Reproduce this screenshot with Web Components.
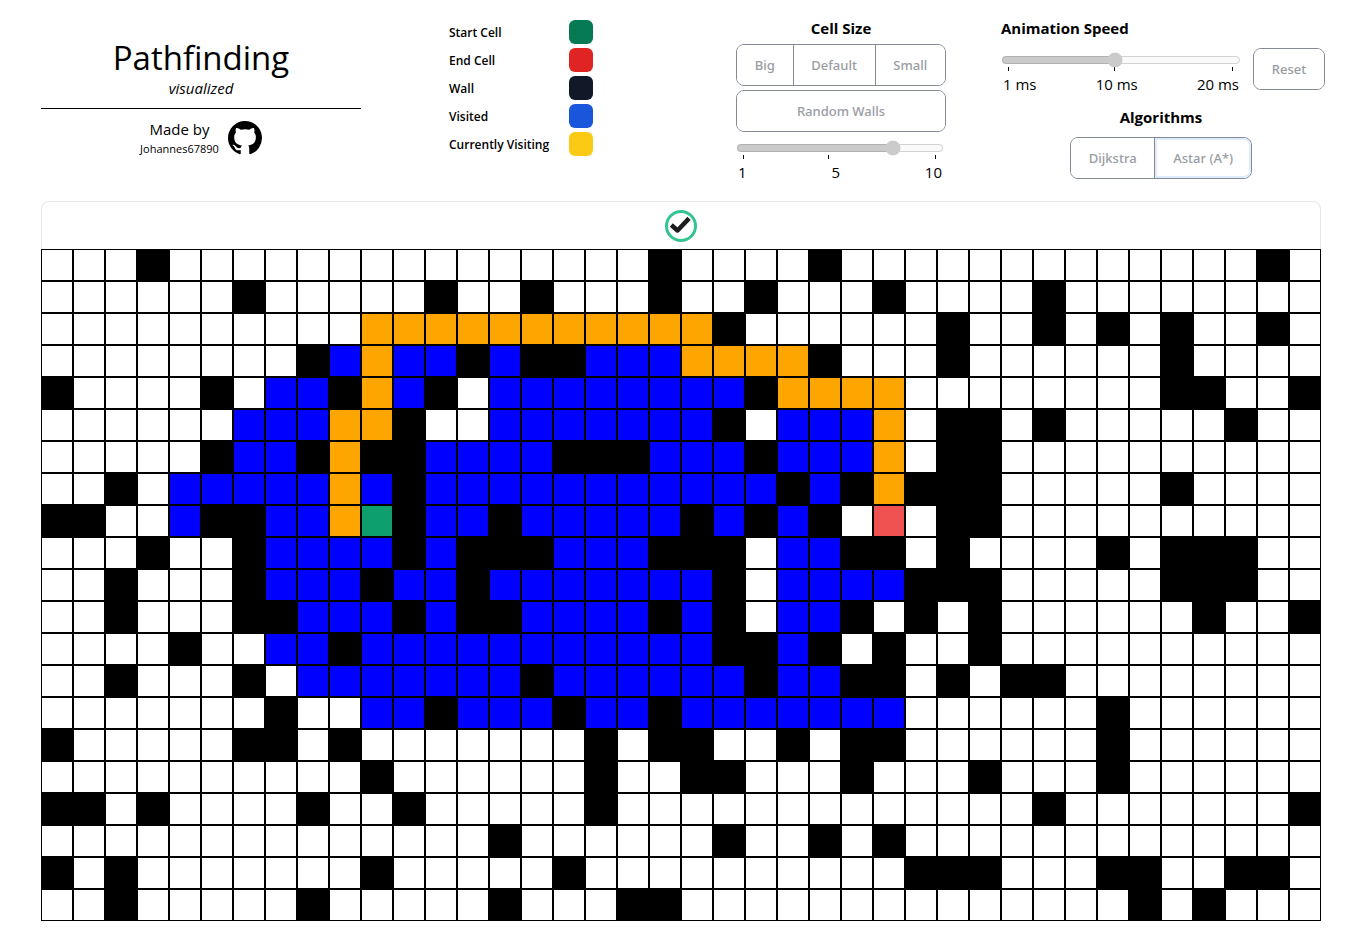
<!DOCTYPE html>
<html lang="en">
<head>
<meta charset="utf-8">
<title>Pathfinding visualized</title>
<style>
  body { margin: 0; background: #fff; color: #000; font-family: "Open Sans", "Noto Sans", sans-serif; }
</style>
</head>
<body>
<path-app></path-app>

<script>
const define = (name, html, setup) => {
  const template = document.createElement('template');
  template.innerHTML = html;
  customElements.define(name, class extends HTMLElement {
    connectedCallback() {
      if (this.shadowRoot) return;
      this.attachShadow({ mode: 'open' }).append(template.content.cloneNode(true));
      if (setup) setup(this, this.shadowRoot);
    }
  });
};

define('path-brand', `
  <style>
    :host { display: block; text-align: center; padding-top: 21px; }
    h1 { margin: 0; font-size: 33px; line-height: 42px; font-weight: 400; }
    p { margin: 0; }
    .sub { font-style: italic; font-size: 15px; line-height: 18px; }
    .made { display: flex; justify-content: center; align-items: center; gap: 9px;
      margin-top: 11px; padding-top: 9px; border-top: 1px solid #000; }
    .by { font-size: 15px; line-height: 22px; }
    .name { font-size: 11px; line-height: 18px; }
    a { display: block; color: #000; }
    svg { display: block; width: 34px; height: 34px; }
  </style>
  <h1>Pathfinding</h1>
  <p class="sub">visualized</p>
  <div class="made">
    <div><p class="by">Made by</p><p class="name">Johannes67890</p></div>
    <a href="#" aria-label="GitHub">
      <svg viewBox="0 0 16 16" fill="currentColor"><path d="M8 0C3.58 0 0 3.58 0 8c0 3.54 2.29 6.53 5.47 7.59.4.07.55-.17.55-.38 0-.19-.01-.82-.01-1.49-2.01.37-2.53-.49-2.69-.94-.09-.23-.48-.94-.82-1.13-.28-.15-.68-.52-.01-.53.63-.01 1.08.58 1.23.82.72 1.21 1.87.87 2.33.66.07-.52.28-.87.51-1.07-1.78-.2-3.64-.89-3.64-3.95 0-.87.31-1.59.82-2.15-.08-.2-.36-1.02.08-2.12 0 0 .67-.21 2.2.82.64-.18 1.32-.27 2-.27s1.36.09 2 .27c1.53-1.04 2.2-.82 2.2-.82.44 1.1.16 1.92.08 2.12.51.56.82 1.27.82 2.15 0 3.07-1.87 3.75-3.65 3.95.29.25.54.73.54 1.48 0 1.07-.01 1.93-.01 2.2 0 .21.15.46.55.38A8.01 8.01 0 0 0 16 8c0-4.42-3.58-8-8-8z"/></svg>
    </a>
  </div>`);

define('legend-item', `
  <style>
    :host { display: flex; justify-content: space-between; align-items: center; height: 24px;
      font-size: 12px; font-weight: 600; white-space: nowrap; }
    i { width: 24px; height: 24px; border-radius: 6px; background: var(--swatch); }
  </style>
  <span><slot></slot></span><i></i>`,
  (host, root) => root.querySelector('i').style.setProperty('--swatch', host.getAttribute('color')));

define('button-group', `
  <style>
    :host { display: flex; box-sizing: border-box; height: 42px; border: 1px solid #848a96;
      border-radius: 8px; overflow: hidden; }
  </style>
  <slot></slot>`);

define('tool-button', `
  <style>
    :host { display: flex; flex: 1 1 auto; }
    :host(:not(:first-child)) { border-left: 1px solid #848a96; }
    button { flex: 1; padding: 0 16px; border: 0; background: #fff; color: #9a9ca3;
      font: 500 13px/20px "Noto Sans", "Open Sans", sans-serif; white-space: nowrap; }
    :host([active]) button { box-shadow: inset 0 0 0 2px #dfecfd; border-radius: 0 7px 7px 0; }
  </style>
  <button type="button" disabled><slot></slot></button>`);

define('range-slider', `
  <style>
    :host { display: block; }
    input { display: block; box-sizing: border-box; width: 100%; height: 16px; margin: 0; color: #000; }
    datalist { display: flex; justify-content: space-between; margin-top: 4px; }
    option { padding: 0 2px; font-size: 15px; line-height: 24px; }
  </style>
  <input type="range" list="marks" disabled>
  <datalist id="marks"></datalist>`,
  (host, root) => {
    const input = root.querySelector('input');
    for (const name of ['min', 'max']) input.setAttribute(name, host.getAttribute(name));
    input.value = host.getAttribute('value');
    input.setAttribute('aria-label', host.getAttribute('label'));
    for (const mark of host.getAttribute('marks').split(',')) {
      const option = document.createElement('option');
      option.value = mark;
      option.textContent = mark + (host.getAttribute('unit') || '');
      root.querySelector('datalist').append(option);
    }
  });

define('status-bar', `
  <style>
    :host { display: flex; justify-content: center; align-items: center; box-sizing: border-box; height: 48px;
      border: 1px solid #e5e7eb; border-bottom: 0; border-radius: 8px 8px 0 0; }
    svg { width: 32px; height: 32px; }
  </style>
  <svg viewBox="0 0 32 32" role="img" aria-label="Done">
    <circle cx="16" cy="16" r="14.5" fill="#fff" stroke="#34c48f" stroke-width="3"/>
    <path d="M8 16.500l4.500 4L22.500 10" fill="none" stroke="#1d1d1f" stroke-width="4.500" stroke-linejoin="round" stroke-linecap="square"/>
  </svg>`);

/* One line per row: w = wall, v = visited, p = path, s = start, e = end, then a column or a span of columns. */
const ROWS = [
  'w3 w19 w24 w38',
  'w6 w12 w15 w19 w22 w26 w31',
  'p10-20 w21 w28 w31 w33 w35 w38',
  'w8 v9 p10 v11-12 w13 v14 w15-16 v17-19 p20-23 w24 w28 w35',
  'w0 w5 v7-8 w9 p10 v11 w12 v14-21 w22 p23-26 w35-36 w39',
  'v6-8 p9-10 w11 v14-20 w21 v23-25 p26 w28-29 w31 w37',
  'w5 v6-7 w8 p9 w10-11 v12-15 w16-18 v19-21 w22 v23-25 p26 w28-29',
  'w2 v4-8 p9 v10 w11 v12-22 w23 v24 w25 p26 w27-29 w35',
  'w0-1 v4 w5-6 v7-8 p9 s10 w11 v12-13 w14 v15-19 w20 v21 w22 v23 w24 e26 w28-29',
  'w3 w6 v7-10 w11 v12 w13-15 v16-18 w19-21 v23-24 w25-26 w28 w33 w35-37',
  'w2 w6 v7-9 w10 v11-12 w13 v14-20 w21 v23-26 w27-29 w35-37',
  'w2 w6-7 v8-10 w11 v12 w13-14 v15-18 w19 v20 w21 v23-24 w25 w27 w29 w36 w39',
  'w4 v7-8 w9 v10-20 w21-22 v23 w24 w26 w29',
  'w2 w6 v8-14 w15 v16-21 w22 v23-24 w25-26 w28 w30-31',
  'w7 v10-11 w12 v13-15 w16 v17-18 w19 v20-26 w33',
  'w0 w6-7 w9 w17 w19-20 w23 w25-26 w33',
  'w10 w17 w20-21 w25 w29 w33',
  'w0-1 w3 w8 w11 w17 w31 w39',
  'w14 w21 w24 w26',
  'w0 w2 w10 w16 w27-29 w33-34 w37-38',
  'w2 w8 w14 w18-19 w34 w36'
];

define('path-grid', `
  <style>
    :host { display: grid; grid-template-columns: repeat(40, 1fr); }
    div { box-sizing: border-box; aspect-ratio: 1; border: 1px solid #000; background: #fff; }
    .w { background: #000; }
    .v { background: #00f; }
    .p { background: #ffa500; }
    .s { background: #0e9f6e; }
    .e { background: #f05252; }
  </style>`,
  (host, root) => {
    for (const row of ROWS) {
      const cells = Array.from({ length: 40 }, () => document.createElement('div'));
      for (const run of row.split(' ')) {
        const [from, to = from] = run.slice(1).split('-').map(Number);
        for (let i = from; i <= to; i++) cells[i].className = run[0];
      }
      root.append(...cells);
    }
  });

define('path-app', `
  <style>
    :host { display: block; padding: 16px 35px 16px 41px; }
    header { display: grid; grid-template-columns: repeat(4, 1fr); padding-bottom: 17px; }
    h2 { margin: 0; font-size: 15px; line-height: 24px; font-weight: 700; text-align: center; white-space: nowrap; }
    .legend { display: flex; flex-direction: column; gap: 4px; width: 144px; margin: 4px auto 0; }
    .size { width: 210px; margin: 0 auto; }
    .size button-group { margin-top: 4px; }
    .size range-slider { margin: 8px 2px 0 0; }
    .speed { display: flex; align-items: flex-start; gap: 12px; margin-right: -4px; }
    .speed section { flex: 1; }
    .speed h2 { text-align: left; }
    .speed range-slider { margin-top: 12px; }
    .speed button-group { width: 72px; margin-top: 32px; }
    .algorithms { width: 182px; margin: 9px auto 0; }
    .algorithms button-group { margin-top: 8px; }
  </style>
  <header>
    <path-brand></path-brand>
    <div class="legend">
      <legend-item color="#057a55">Start Cell</legend-item>
      <legend-item color="#e02424">End Cell</legend-item>
      <legend-item color="#111928">Wall</legend-item>
      <legend-item color="#1a56db">Visited</legend-item>
      <legend-item color="#faca15">Currently Visiting</legend-item>
    </div>
    <div class="size">
      <h2>Cell Size</h2>
      <button-group><tool-button>Big</tool-button><tool-button>Default</tool-button><tool-button>Small</tool-button></button-group>
      <button-group><tool-button>Random Walls</tool-button></button-group>
      <range-slider label="Wall density" min="1" max="10" value="8" marks="1,5,10"></range-slider>
    </div>
    <div>
      <div class="speed">
        <section>
          <h2>Animation Speed</h2>
          <range-slider label="Animation speed" min="1" max="20" value="10" marks="1,10,20" unit=" ms"></range-slider>
        </section>
        <button-group><tool-button>Reset</tool-button></button-group>
      </div>
      <div class="algorithms">
        <h2>Algorithms</h2>
        <button-group><tool-button>Dijkstra</tool-button><tool-button active>Astar (A*)</tool-button></button-group>
      </div>
    </div>
  </header>
  <main>
    <status-bar></status-bar>
    <path-grid></path-grid>
  </main>`);
</script>
</body>
</html>
